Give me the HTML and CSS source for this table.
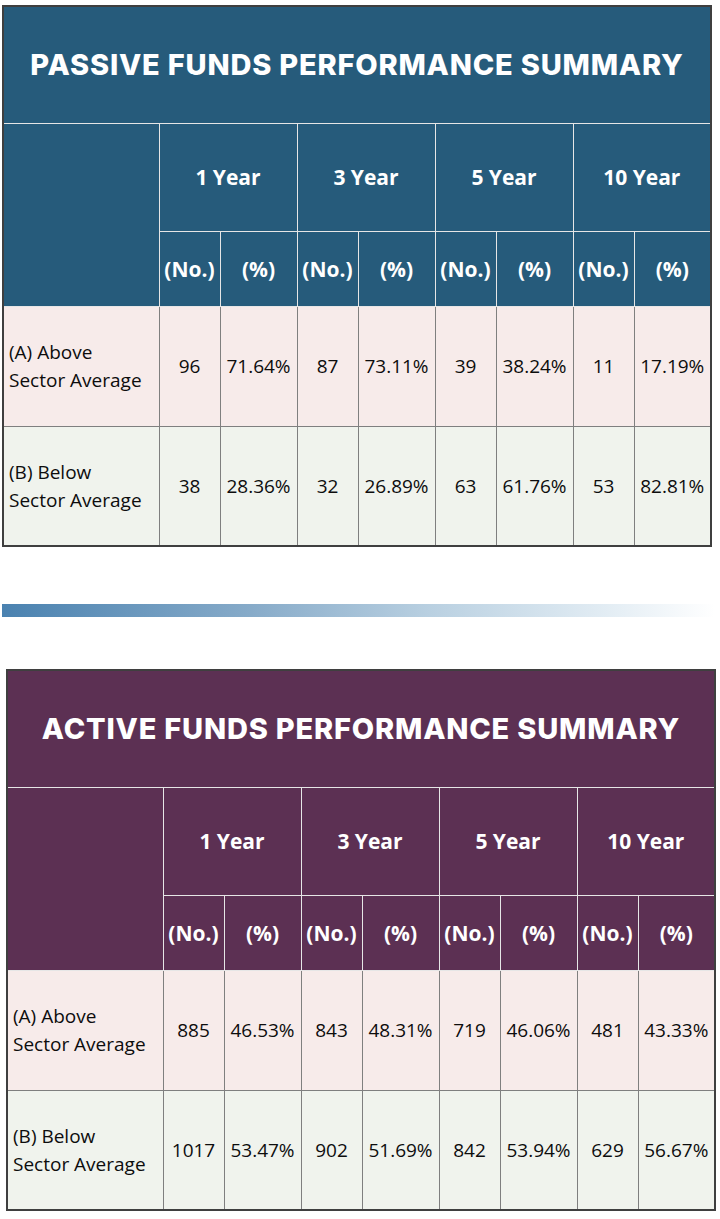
FILE: index.html
```html
<!DOCTYPE html>
<html>
<head>
<meta charset="utf-8">
<link rel="stylesheet" href="styles.css">
</head>
<body>
<div class="page">
  <table class="summary passive">
    <colgroup>
      <col class="c-label"><col class="c-no"><col class="c-pct"><col class="c-no"><col class="c-pct"><col class="c-no"><col class="c-pct"><col class="c-no"><col class="c-pct">
    </colgroup>
    <tr class="r-title"><th colspan="9" class="title">PASSIVE FUNDS PERFORMANCE SUMMARY</th></tr>
    <tr class="r-year"><th rowspan="2" class="blank"></th><th colspan="2">1 Year</th><th colspan="2">3 Year</th><th colspan="2">5 Year</th><th colspan="2">10 Year</th></tr>
    <tr class="r-sub"><th>(No.)</th><th>(%)</th><th>(No.)</th><th>(%)</th><th>(No.)</th><th>(%)</th><th>(No.)</th><th>(%)</th></tr>
    <tr class="r-above"><td class="label">(A) Above<br>Sector Average</td><td>96</td><td>71.64%</td><td>87</td><td>73.11%</td><td>39</td><td>38.24%</td><td>11</td><td>17.19%</td></tr>
    <tr class="r-below"><td class="label">(B) Below<br>Sector Average</td><td>38</td><td>28.36%</td><td>32</td><td>26.89%</td><td>63</td><td>61.76%</td><td>53</td><td>82.81%</td></tr>
  </table>

  <div class="divider"></div>

  <table class="summary active">
    <colgroup>
      <col class="c-label"><col class="c-no"><col class="c-pct"><col class="c-no"><col class="c-pct"><col class="c-no"><col class="c-pct"><col class="c-no"><col class="c-pct">
    </colgroup>
    <tr class="r-title"><th colspan="9" class="title">ACTIVE FUNDS PERFORMANCE SUMMARY</th></tr>
    <tr class="r-year"><th rowspan="2" class="blank"></th><th colspan="2">1 Year</th><th colspan="2">3 Year</th><th colspan="2">5 Year</th><th colspan="2">10 Year</th></tr>
    <tr class="r-sub"><th>(No.)</th><th>(%)</th><th>(No.)</th><th>(%)</th><th>(No.)</th><th>(%)</th><th>(No.)</th><th>(%)</th></tr>
    <tr class="r-above"><td class="label">(A) Above<br>Sector Average</td><td>885</td><td>46.53%</td><td>843</td><td>48.31%</td><td>719</td><td>46.06%</td><td>481</td><td>43.33%</td></tr>
    <tr class="r-below"><td class="label">(B) Below<br>Sector Average</td><td>1017</td><td>53.47%</td><td>902</td><td>51.69%</td><td>842</td><td>53.94%</td><td>629</td><td>56.67%</td></tr>
  </table>
</div>
</body>
</html>
```

FILE: styles.css
```css
html, body {
  margin: 0;
  padding: 0;
  background: #ffffff;
}

.page {
  width: 720px;
  padding-top: 5px;
}

.summary {
  border-collapse: collapse;
  table-layout: fixed;
  width: 708px;
  border: 2px solid #3f3f3f;
  font-family: "Open Sans", "Noto Sans", sans-serif;
}

.passive {
  margin-left: 2px;
}

.active {
  margin-left: 6px;
}

.c-label { width: 156px; }
.c-no { width: 61px; }
.c-pct { width: 77px; }

.summary th {
  color: #ffffff;
  font-weight: 700;
  font-size: 21px;
  text-align: center;
  vertical-align: middle;
  border: 1px solid #e6e6e6;
  padding: 0;
}

.passive th { background: #265b7b; }
.active th { background: #5c3053; }

.summary th.title {
  font-family: "Inter", "DejaVu Sans", sans-serif;
  font-weight: 800;
  font-size: 29px;
  letter-spacing: 0.8px;
  border-top: none;
}

.r-title { height: 117px; }
.r-year { height: 108px; }
.r-sub { height: 75px; }
.r-above, .r-below { height: 120px; }

.summary td {
  font-size: 19px;
  color: #0d0d0d;
  text-align: center;
  vertical-align: middle;
  border: 1px solid #7f7f7f;
  padding: 0;
  white-space: nowrap;
}

.summary td.label {
  text-align: left;
  padding-left: 5px;
  line-height: 28px;
}

.r-above td { background: #f7ebea; }
.r-below td { background: #f0f3ed; }

.divider {
  width: 713px;
  height: 13px;
  margin: 57px 0 52px 2px;
  background: linear-gradient(to right, #4a82b0 0%, #87abc9 35%, #b9d0e1 60%, #e3edf4 85%, #ffffff 100%);
}
```
